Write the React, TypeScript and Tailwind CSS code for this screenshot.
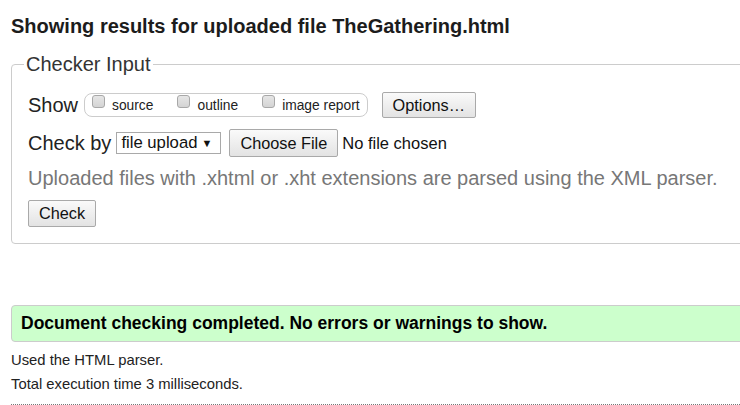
import React from 'react';

function Btn({ children, className = '' }: { children: React.ReactNode; className?: string }) {
  return (
    <button
      type="button"
      className={`flex items-center rounded-[2px] border border-[#a9a9a9] bg-gradient-to-b from-[#fafafa] to-[#e3e3e3] px-[10px] text-[16.3px] text-[#111] ${className}`}
    >
      {children}
    </button>
  );
}

function Check({ label }: { label: string }) {
  return (
    <label className="flex items-start gap-[7px]">
      <span className="mt-[1px] h-[13px] w-[13px] rounded-[3px] border border-[#a8a8a8] bg-gradient-to-b from-[#e6e6e6] to-[#d4d4d4]" />
      <span className="text-[13.8px] leading-[23px] text-[#222]">{label}</span>
    </label>
  );
}

export default function App() {
  return (
    <div className="h-[405px] w-[740px] overflow-hidden bg-white font-['Liberation_Sans',Arial,sans-serif]">
      <div className="w-[800px] pl-[11px] pt-[14px]">
        <h2 className="text-[20px] font-bold leading-[24px] text-[#1c1c1c]">
          Showing results for uploaded file TheGathering.html
        </h2>

        <fieldset className="mt-[15px] rounded-[4px] border border-[#cccccc] pb-[16px] pl-[16px]">
          <legend className="-ml-[4px] px-[2px] text-[20px] leading-[23px] text-[#333]">Checker Input</legend>

          {/* Show row */}
          <div className="mt-[15px] flex h-[28px] items-center">
            <span className="text-[20px] text-[#222]">Show</span>
            <div className="ml-[6px] flex h-[24px] items-start gap-[24px] rounded-[8px] border border-[#cccccc] px-[7px]">
              <Check label="source" />
              <Check label="outline" />
              <Check label="image report" />
            </div>
            <Btn className="ml-[14px] h-[26px]">Options…</Btn>
          </div>

          {/* Check by row */}
          <div className="mt-[10px] flex h-[28px] items-center">
            <span className="text-[20px] text-[#222]">Check by</span>
            <div className="ml-[5px] flex h-[22px] w-[105px] items-center justify-between border border-[#a9a9a9] bg-white pl-[4px] pr-[8px] text-[16.7px] text-[#111]">
              <span>file upload</span>
              <span className="text-[11px]">▼</span>
            </div>
            <Btn className="ml-[8px] h-[28px]">Choose File</Btn>
            <span className="ml-[4px] text-[16.5px] text-[#111]">No file chosen</span>
          </div>

          <p className="mt-[8px] text-[20px] leading-[26px] text-[#777]">
            Uploaded files with .xhtml or .xht extensions are parsed using the XML parser.
          </p>

          <Btn className="mt-[9px] h-[27px] text-[15.8px]">Check</Btn>
        </fieldset>

        <div className="mt-[61px] flex h-[37px] items-center rounded-l-[4px] border border-[#cccccc] bg-[#ccffcc] pl-[9px]">
          <span className="text-[17.5px] font-bold text-black">
            Document checking completed. No errors or warnings to show.
          </span>
        </div>

        <p className="mt-[6px] text-[14.8px] leading-[24px] text-[#222]">Used the HTML parser.</p>
        <p className="text-[14.8px] leading-[24px] text-[#222]">Total execution time 3 milliseconds.</p>
        <div className="mt-[8px] border-t border-dotted border-[#777]" />
      </div>
    </div>
  );
}
